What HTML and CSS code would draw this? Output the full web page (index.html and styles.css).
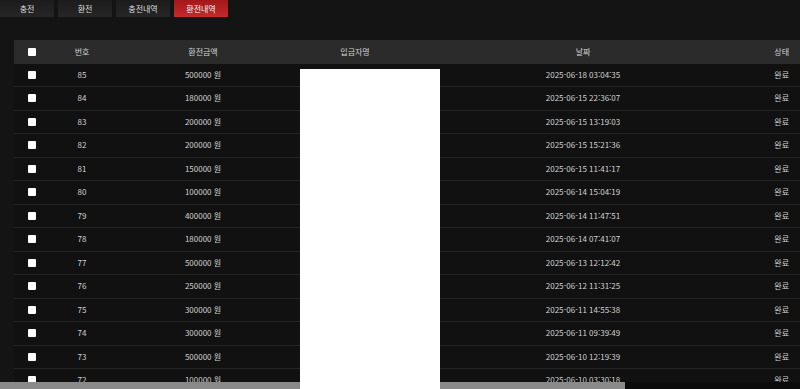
FILE: index.html
```html
<!DOCTYPE html>
<html lang="ko">
<head>
<meta charset="utf-8">
<link rel="stylesheet" href="styles.css">
</head>
<body>
<nav class="tabs">
  <a class="tab">충전</a>
  <a class="tab">환전</a>
  <a class="tab">충전내역</a>
  <a class="tab active">환전내역</a>
</nav>
<div class="table">
  <div class="row head">
    <span class="c-chk"><i class="box"></i></span>
    <span>번호</span>
    <span>환전금액</span>
    <span>입금자명</span>
    <span>날짜</span>
    <span class="c-state">상태</span>
  </div>
  <div class="row"><span class="c-chk"><i class="box"></i></span><span>85</span><span>500000 원</span><span></span><span>2025-06-18 03:04:35</span><span class="c-state">완료</span></div>
  <div class="row"><span class="c-chk"><i class="box"></i></span><span>84</span><span>180000 원</span><span></span><span>2025-06-15 22:36:07</span><span class="c-state">완료</span></div>
  <div class="row"><span class="c-chk"><i class="box"></i></span><span>83</span><span>200000 원</span><span></span><span>2025-06-15 13:19:03</span><span class="c-state">완료</span></div>
  <div class="row"><span class="c-chk"><i class="box"></i></span><span>82</span><span>200000 원</span><span></span><span>2025-06-15 15:21:36</span><span class="c-state">완료</span></div>
  <div class="row"><span class="c-chk"><i class="box"></i></span><span>81</span><span>150000 원</span><span></span><span>2025-06-15 11:41:17</span><span class="c-state">완료</span></div>
  <div class="row"><span class="c-chk"><i class="box"></i></span><span>80</span><span>100000 원</span><span></span><span>2025-06-14 15:04:19</span><span class="c-state">완료</span></div>
  <div class="row"><span class="c-chk"><i class="box"></i></span><span>79</span><span>400000 원</span><span></span><span>2025-06-14 11:47:51</span><span class="c-state">완료</span></div>
  <div class="row"><span class="c-chk"><i class="box"></i></span><span>78</span><span>180000 원</span><span></span><span>2025-06-14 07:41:07</span><span class="c-state">완료</span></div>
  <div class="row"><span class="c-chk"><i class="box"></i></span><span>77</span><span>500000 원</span><span></span><span>2025-06-13 12:12:42</span><span class="c-state">완료</span></div>
  <div class="row"><span class="c-chk"><i class="box"></i></span><span>76</span><span>250000 원</span><span></span><span>2025-06-12 11:31:25</span><span class="c-state">완료</span></div>
  <div class="row"><span class="c-chk"><i class="box"></i></span><span>75</span><span>300000 원</span><span></span><span>2025-06-11 14:55:38</span><span class="c-state">완료</span></div>
  <div class="row"><span class="c-chk"><i class="box"></i></span><span>74</span><span>300000 원</span><span></span><span>2025-06-11 09:39:49</span><span class="c-state">완료</span></div>
  <div class="row"><span class="c-chk"><i class="box"></i></span><span>73</span><span>500000 원</span><span></span><span>2025-06-10 12:19:39</span><span class="c-state">완료</span></div>
  <div class="row"><span class="c-chk"><i class="box"></i></span><span>72</span><span>100000 원</span><span></span><span>2025-06-10 03:30:18</span><span class="c-state">완료</span></div>
</div>
<div class="redact"></div>
<div class="hscroll"><div class="thumb"></div></div>
</body>
</html>
```
FILE: styles.css
```css
html, body {
  margin: 0;
  padding: 0;
  height: 100%;
  overflow: hidden;
  background: #141414;
  font-family: "Noto Sans CJK KR", "Noto Sans", sans-serif;
  color: #d2d2d2;
}
.tabs {
  display: flex;
  gap: 4px;
  height: 17px;
}
.tab {
  width: 54px;
  display: flex;
  align-items: center;
  justify-content: center;
  font-size: 8px;
  color: #dcdcdc;
  background: linear-gradient(#1c1c1c, #262626);
}
.tab.active {
  background: linear-gradient(#a3181a, #c42a2c);
  color: #f4f4f4;
}
.table {
  margin: 23px 0 0 14px;
  background: #111;
}
.row {
  display: grid;
  grid-template-columns: 36px 64px 178px 126px 330px 1fr;
  align-items: center;
  height: 22.5px;
  border-bottom: 1px solid #262626;
  font-size: 8px;
  line-height: 1;
}
.row > span {
  text-align: center;
}
.row.head {
  background: #2b2b2b;
  height: 23.5px;
  border-bottom: none;
}
.row > .c-state {
  text-align: right;
  padding-right: 11px;
}
.c-chk {
  display: flex;
  justify-content: center;
}
.box {
  display: block;
  width: 8px;
  height: 8px;
  background: #fff;
  border-radius: 1px;
}
.redact {
  position: absolute;
  left: 300px;
  top: 69px;
  width: 140px;
  height: 320px;
  background: #fff;
  z-index: 3;
}
.hscroll {
  position: absolute;
  left: 0;
  right: 0;
  bottom: 0;
  height: 7px;
  background: #0b0b0b;
  z-index: 2;
}
.thumb {
  width: 625px;
  height: 100%;
  background: #8a8a8a;
}
```
